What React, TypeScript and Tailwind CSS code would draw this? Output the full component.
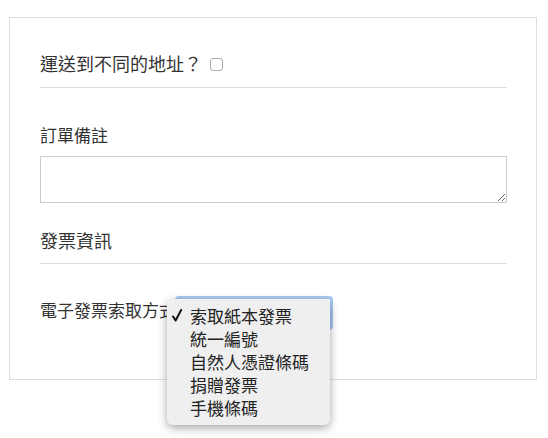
import React from "react";

const font = { fontFamily: '"Noto Sans CJK TC", "Noto Sans", sans-serif' };

function Check() {
  return (
    <svg width="10" height="13" viewBox="0 0 10 13" className="block">
      <path d="M1 7.5 L3.6 11.5 L9.2 1" fill="none" stroke="#111" strokeWidth="2" strokeLinecap="round" strokeLinejoin="round" />
    </svg>
  );
}

export default function App() {
  const items = ["索取紙本發票", "統一編號", "自然人憑證條碼", "捐贈發票", "手機條碼"];
  return (
    <div className="w-[548px] h-[438px] bg-white text-[#333] overflow-hidden" style={font}>
      <div className="mt-[17px] ml-[9px] w-[528px] border border-[#dddddd] pl-[30px] pr-[29px] pt-[33px] pb-[49px]">
        <div className="h-6 flex items-center text-[18px] leading-6">
          <span>運送到不同的地址？</span>
          <span className="ml-[8px] mt-[2px] inline-block w-[13px] h-[13px] rounded-[3px] border border-[#adadad] bg-white"></span>
        </div>
        <div className="mt-[12px] h-px bg-[#dddddd]"></div>
        <div className="mt-[35px] text-[17px] leading-6">訂單備註</div>
        <textarea className="mt-[9px] block w-full h-[47px] border border-[#cccccc] resize-y outline-none"></textarea>
        <div className="mt-[25px] text-[18px] leading-6">發票資訊</div>
        <div className="mt-[11px] h-px bg-[#dddddd]"></div>
        <div className="mt-[32px] flex items-start">
          <span className="mt-[2px] text-[17px] leading-6 whitespace-nowrap">電子發票索取方式</span>
          <div className="relative -ml-px">
            <div className="w-[158px] h-[34px] rounded-[4px] border-[3px] border-[#a8c9f0] bg-white"></div>
            <div className="absolute left-[-8px] top-[3px] w-[163px] h-[126px] rounded-[6px] bg-[#efefef] shadow-[0_3px_10px_rgba(0,0,0,0.35)] pt-[5px] pl-[5px] text-[17px] leading-[23px] text-[#222]">
              {items.map((t, i) => (
                <div key={t} className="flex h-[23px] items-center">
                  <span className="w-[18px] flex items-center">{i === 0 ? <Check /> : null}</span>
                  <span className="whitespace-nowrap">{t}</span>
                </div>
              ))}
            </div>
          </div>
        </div>
      </div>
    </div>
  );
}
